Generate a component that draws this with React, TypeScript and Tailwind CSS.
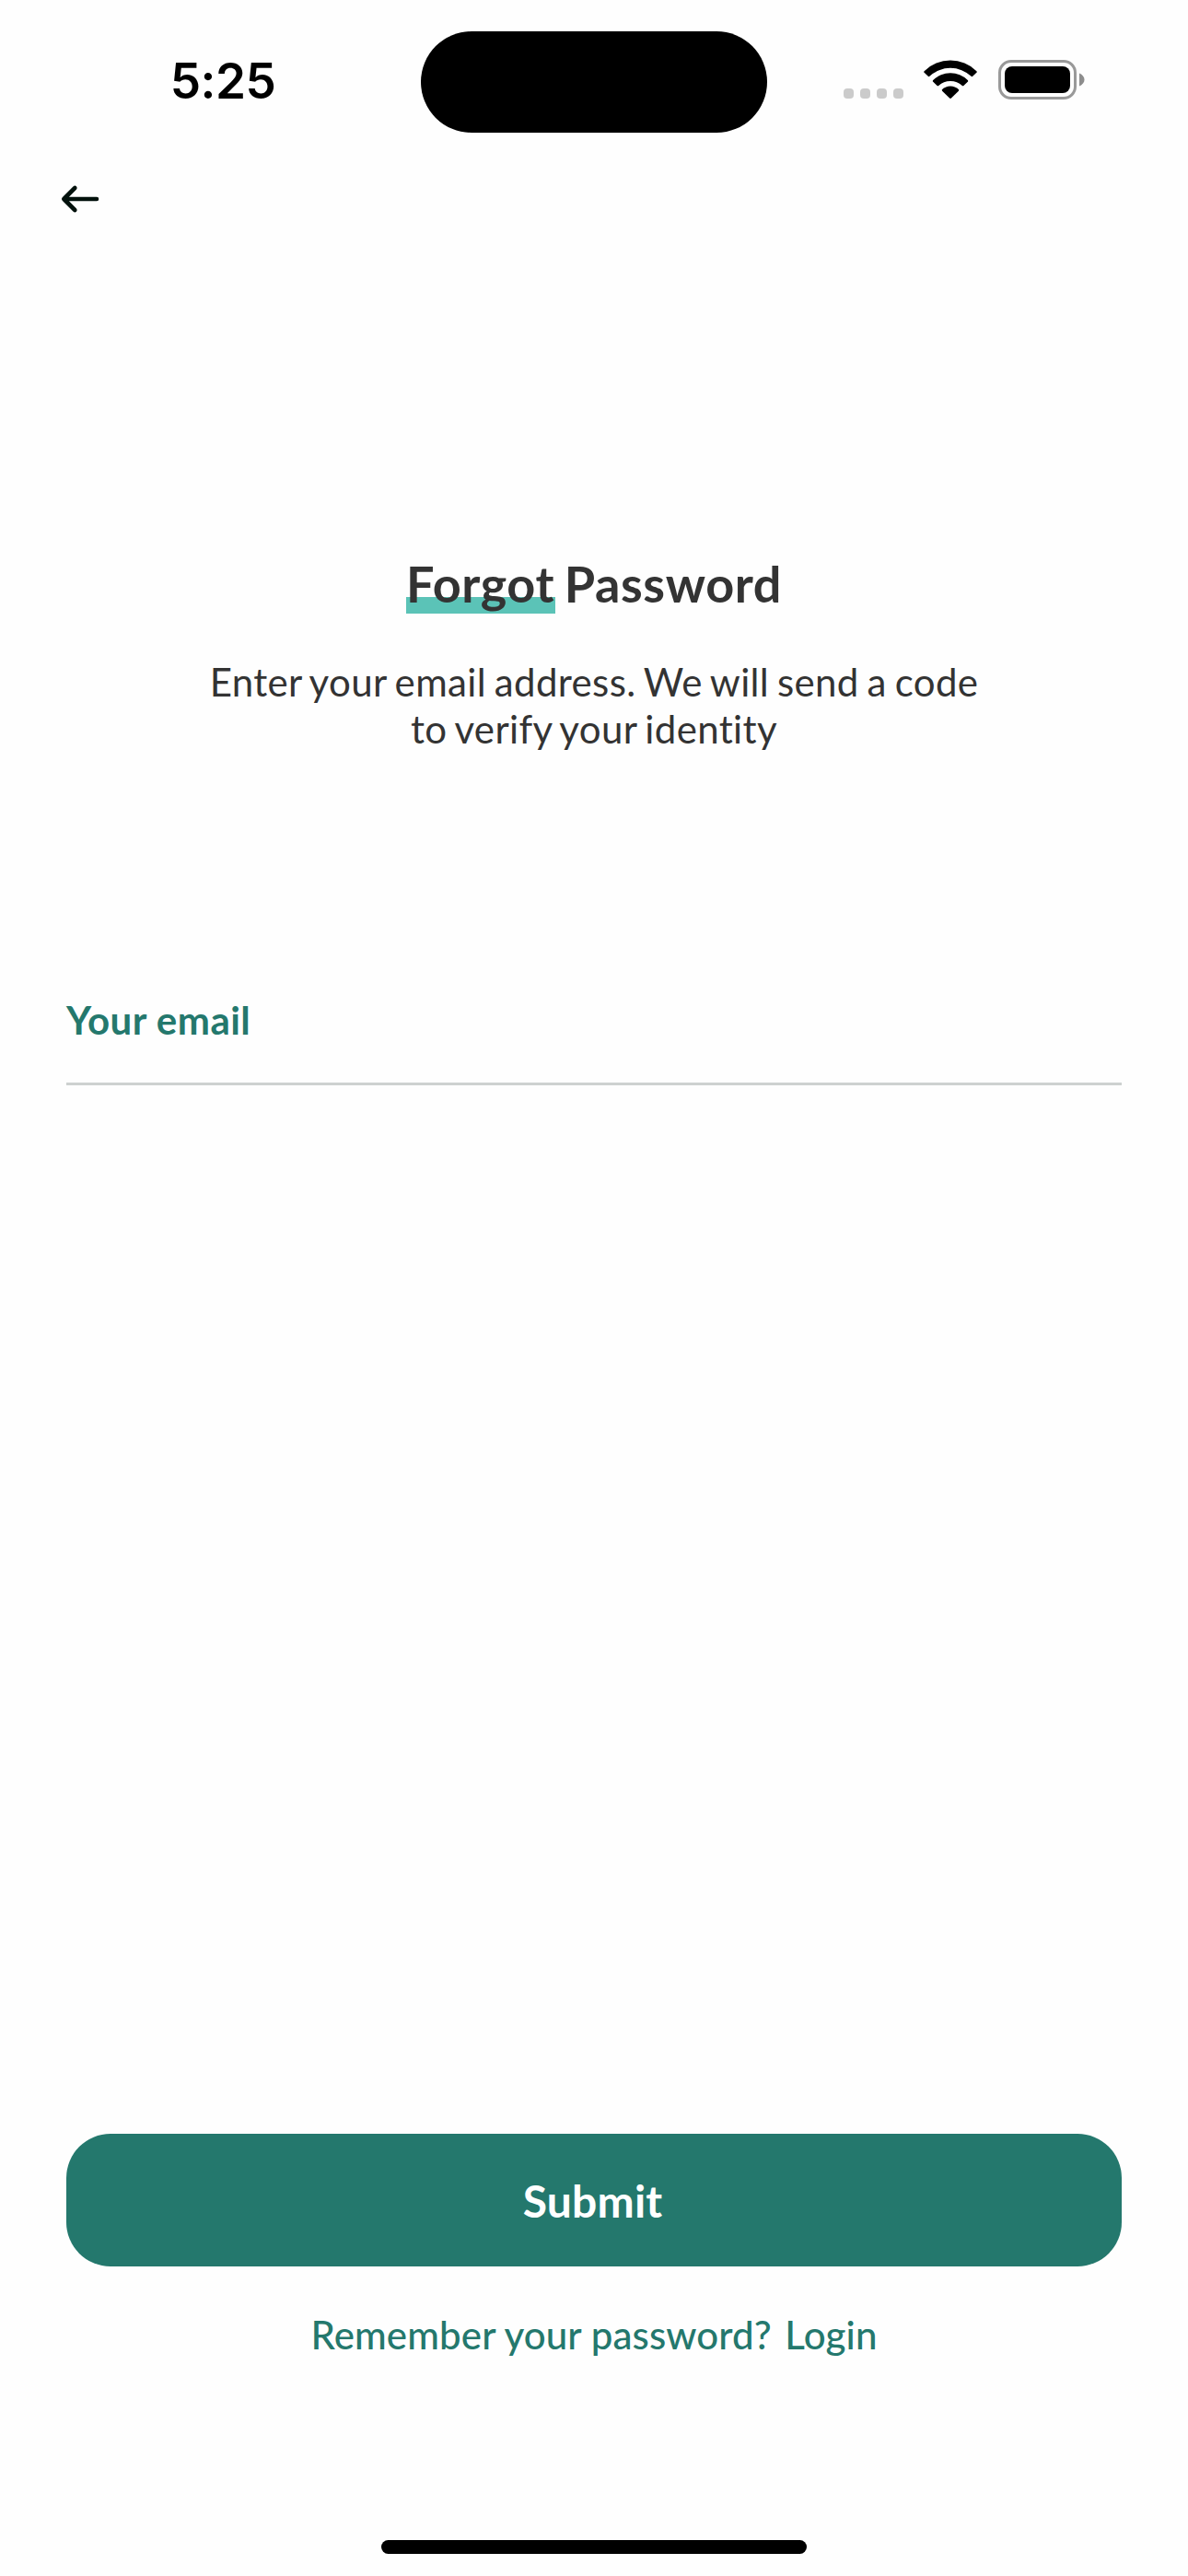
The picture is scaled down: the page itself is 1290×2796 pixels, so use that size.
function StatusBar() {
  return (
    <header className="flex h-[177px] items-start text-black">
      <div className="flex w-[457px] justify-center pt-[56px] pl-[27px]">
        <span className="font-['Inter',sans-serif] text-[53px] leading-[64px] font-semibold tracking-[-0.5px]">5:25</span>
      </div>
      <div className="mt-[33.5px] h-[110.5px] w-[376px] rounded-full bg-black" />
      <div className="ml-[83px] flex gap-[7px] pt-[96px]">
        <i className="size-[11px] rounded-[4px] bg-[#cbcbcb]" />
        <i className="size-[11px] rounded-[4px] bg-[#cbcbcb]" />
        <i className="size-[11px] rounded-[4px] bg-[#cbcbcb]" />
        <i className="size-[11px] rounded-[4px] bg-[#cbcbcb]" />
      </div>
      <svg className="mt-[64px] ml-[21px]" width="60" height="44" viewBox="0 0 60 44" fill="currentColor">
        <path d="M1.6 13.2A40.6 40.6 0 0 1 58.4 13.2Q59.3 14 58.4 14.8L54.2 18.8Q53.4 19.5 52.6 18.8A33 33 0 0 0 7.4 18.8Q6.6 19.5 5.8 18.8L1.6 14.8Q.7 14 1.6 13.2Z" />
        <path d="M11.2 23.1A26.6 26.6 0 0 1 48.8 23.1Q49.6 23.9 48.8 24.7L44.4 29Q43.6 29.7 42.8 29A18.8 18.8 0 0 0 17.2 29Q16.4 29.7 15.6 29L11.2 24.7Q10.4 23.9 11.2 23.1Z" />
        <path d="M21.1 33.1A12.8 12.8 0 0 1 38.9 33.1Q39.7 33.9 38.9 34.7L30.9 42.6Q30 43.4 29.1 42.6L21.1 34.7Q20.3 33.9 21.1 33.1Z" />
      </svg>
      <svg className="mt-[64px] ml-[20px]" width="98" height="46" viewBox="0 0 98 46">
        <rect x="3.5" y="2.5" width="82" height="40" rx="12.5" fill="none" stroke="#999" strokeWidth="3" />
        <rect x="9" y="8" width="71" height="29" rx="8" fill="#000" />
        <path d="M90 15.5C93.4 17 95.5 19.5 95.5 22.5S93.4 28 90 29.5Z" fill="#8d8d8d" />
      </svg>
    </header>
  );
}

export default function App() {
  return (
    <div className="flex h-[2796px] w-[1290px] flex-col overflow-hidden bg-[#fefefe] font-['Lato',sans-serif] [font-variant-ligatures:none]">
      <StatusBar />
      <nav className="flex h-[78px] items-center pl-[64px]">
        <button aria-label="Back">
          <svg width="46" height="32" viewBox="0 0 46 32" fill="none" stroke="#02110c" strokeWidth="4.6" strokeLinecap="round" strokeLinejoin="round">
            <path d="M41 16H5.5M17.3 4 5.3 16l12 12" />
          </svg>
        </button>
      </nav>

      <main className="flex flex-1 flex-col px-[72px]">
        <section className="flex flex-col items-center pt-[346px] text-[#333333]">
          <h1 className="flex text-[54px] leading-[65px] font-bold tracking-[0.6px]">
            <span className="bg-[linear-gradient(#5bc3b7,#5bc3b7)] bg-[length:100%_18px] bg-[position:0_47px] bg-no-repeat pr-[0.8px]">Forgot</span>
            <span className="whitespace-pre [word-spacing:-3.8px]"> Password</span>
          </h1>
          <p className="mt-[49px] text-center text-[42px] leading-[51px] tracking-[0.35px] [word-spacing:-2.2px]">
            Enter your email address. We will send a code
            <br />
            to verify your identity
          </p>
        </section>

        <label className="mt-[265px] block h-[96px] border-b-[3px] border-[#cdd1d0] text-[42px] leading-[51px] font-bold tracking-[0.5px] text-[#24786d]">
          Your email
        </label>

        <div className="mt-auto flex flex-col items-center pb-[197.5px]">
          <button className="h-[144px] w-full rounded-[48px] bg-[#24786d] pt-[2px] pr-[3px] text-[48px] font-bold tracking-[0.2px] text-white">
            Submit
          </button>
          <div className="mt-[49px] flex gap-[14.5px] text-[42px] leading-[51px] font-medium tracking-[0.12px] text-[#24786d]">
            <span>Remember your password?</span>
            <a>Login</a>
          </div>
        </div>
      </main>
      <footer className="flex h-[39px] justify-center">
        <div className="h-[15px] w-[462px] rounded-full bg-black" />
      </footer>
    </div>
  );
}
